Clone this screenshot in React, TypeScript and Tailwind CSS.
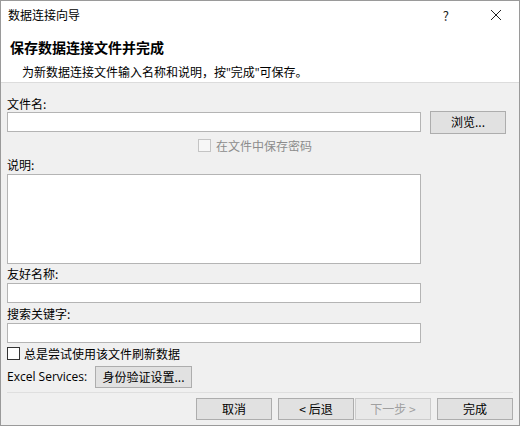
import React from "react";

const font = {
  fontFamily: '"Noto Sans CJK SC", "Noto Sans", sans-serif',
};

const latin = { fontFamily: '"Open Sans", "Noto Sans", sans-serif' };

function Field({ label, mt, h = 20 }: { label: string; mt: string; h?: number }) {
  return (
    <>
      <div className={`${mt} h-[16px] leading-[16px]`}>{label}</div>
      <div
        className="mt-px w-[414px] border border-[#b4b4b4] bg-white"
        style={{ height: h }}
      />
    </>
  );
}

function Button({
  children,
  disabled = false,
  className = "",
}: {
  children: React.ReactNode;
  disabled?: boolean;
  className?: string;
}) {
  return (
    <div
      className={`flex items-center justify-center border ${
        disabled
          ? "border-[#cccccc] bg-[#e8e8e8] text-[#a0a0a0]"
          : "border-[#adadad] bg-[#e1e1e1] text-black"
      } ${className}`}
    >
      {children}
    </div>
  );
}

export default function App() {
  return (
    <div
      className="flex h-[426px] w-[520px] flex-col border border-[#9a9a9a] bg-[#f0f0f0] text-[12px] text-black"
      style={font}
    >
      {/* header */}
      <div className="h-[82px] border-b border-[#dcdcdc] bg-white">
        <div className="flex h-[28px] items-center pl-[7px]">
          <span className="text-[12px]">数据连接向导</span>
          <span className="ml-auto mr-[41px] text-[13px] leading-none text-[#222]">?</span>
          <svg width="12" height="12" viewBox="0 0 12 12" className="mr-[17px]">
            <path d="M1 1L11 11M11 1L1 11" stroke="#222" strokeWidth="1" />
          </svg>
        </div>
        <div className="mt-[9px] pl-[9px] text-[14px] font-bold leading-[18px]">
          保存数据连接文件并完成
        </div>
        <div className="mt-[8px] pl-[21px] text-[12px] leading-[16px]">
          为新数据连接文件输入名称和说明，按<span style={latin}>"</span>完成
          <span style={latin}>"</span>可保存。
        </div>
      </div>

      {/* body */}
      <div className="flex flex-col px-[6px]">
        <div className="mt-[13px] h-[16px] leading-[16px]">文件名:</div>
        <div className="flex h-[20px] items-center">
          <div className="h-[20px] w-[414px] border border-[#b4b4b4] bg-white" />
          <Button className="ml-[9px] h-[23px] w-[76px]">浏览...</Button>
        </div>

        <div className="mt-[7px] flex h-[13px] items-center pl-[191px] text-[#8c8c8c]">
          <div className="h-[13px] w-[13px] border border-[#c4c4c4] bg-[#f7f7f7]" />
          <span className="ml-[5px] leading-[13px]">在文件中保存密码</span>
        </div>

        <Field label="说明:" mt="mt-[5px]" h={90} />
        <Field label="友好名称:" mt="mt-[2px]" />
        <Field label="搜索关键字:" mt="mt-[3px]" />

        <div className="mt-[4px] flex h-[13px] items-center">
          <div className="h-[13px] w-[13px] border border-[#333] bg-white" />
          <span className="ml-[4px] leading-[13px]">总是尝试使用该文件刷新数据</span>
        </div>

        <div className="mt-[6px] flex h-[22px] items-center">
          <span className="w-[88px]" style={latin}>
            Excel Services:
          </span>
          <Button className="h-[22px] w-[97px]">身份验证设置...</Button>
        </div>

        <div className="mt-[4px] h-px bg-[#dfdfdf]" />

        <div className="mt-[5px] flex h-[22px] justify-end">
          <Button className="w-[76px]">取消</Button>
          <Button className="ml-[6px] w-[76px]">&lt; 后退</Button>
          <Button disabled className="ml-px w-[76px]">下一步 &gt;</Button>
          <Button className="ml-[6px] w-[76px]">完成</Button>
        </div>
      </div>
    </div>
  );
}
